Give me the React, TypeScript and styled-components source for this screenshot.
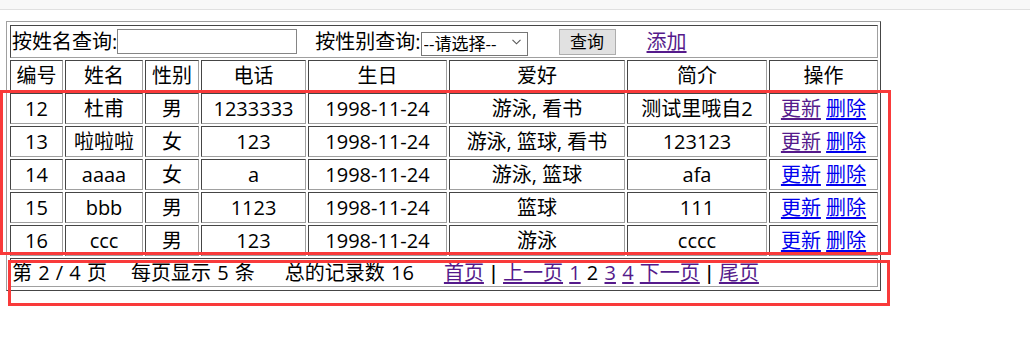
import React from "react";
import styled, { createGlobalStyle } from "styled-components";

const GlobalStyle = createGlobalStyle`
  html, body { margin: 0; padding: 0; background: #fff; }
  body {
    font-family: "Open Sans", "Noto Sans CJK SC", sans-serif;
    font-size: 20px;
    color: #000;
  }
`;

const Page = styled.div`
  position: relative;
  width: 1030px;
  height: 341px;
  overflow: hidden;
`;

const TopStrip = styled.div`
  height: 9px;
  background: #f8f8f8;
  border-bottom: 1px solid #e0e0e0;
`;

const Grid = styled.table`
  margin: 11px 0 0 6px;
  border-collapse: separate;
  border-spacing: 2px;
  padding: 1px 0 1px 1px;
  border: 1px solid;
  border-color: #a0a0a0 #454545 #454545 #a0a0a0;
  table-layout: fixed;
  width: 875px;
  box-sizing: border-box;
  font-size: 20px;
  line-height: 26px;
`;

const Col = styled.col<{ $w: number }>`
  width: ${(p) => p.$w}px;
`;

const Row = styled.tr<{ $h: number }>`
  height: ${(p) => p.$h}px;
`;

const Cell = styled.td<{ $left?: boolean }>`
  border: 1px solid;
  border-color: #454545 #a0a0a0 #a0a0a0 #454545;
  padding: 0 1px;
  text-align: ${(p) => (p.$left ? "left" : "center")};
  vertical-align: middle;
  white-space: nowrap;
  overflow: hidden;
`;

const HeadCell = styled.th`
  border: 1px solid;
  border-color: #454545 #a0a0a0 #a0a0a0 #454545;
  padding: 0 1px;
  font-weight: normal;
  text-align: center;
  vertical-align: middle;
  white-space: nowrap;
`;

const SearchBar = styled.div`
  display: flex;
  align-items: center;
  height: 31px;
`;

const Label = styled.span<{ $gap?: number }>`
  margin-left: ${(p) => p.$gap ?? 0}px;
`;

const NameInput = styled.input`
  box-sizing: border-box;
  width: 180px;
  height: 25px;
  margin: 0;
  padding: 0 2px;
  border: 1px solid #858585;
  border-radius: 0;
  background: #fff;
  font: inherit;
  font-size: 16px;
`;

const SelectWrap = styled.span`
  position: relative;
  display: inline-block;
  width: 107px;
  height: 24px;
`;

const GenderSelect = styled.select`
  appearance: none;
  -webkit-appearance: none;
  box-sizing: border-box;
  width: 107px;
  height: 24px;
  margin: 0;
  padding: 0 0 0 2px;
  border: 1px solid #767676;
  border-radius: 0;
  background: #fff;
  color: #000;
  font-family: "Open Sans", "Noto Sans CJK SC", sans-serif;
  font-size: 17px;
  line-height: 22px;
`;

const Chevron = styled.svg`
  position: absolute;
  right: 7px;
  top: 9px;
  pointer-events: none;
`;

const QueryButton = styled.button`
  box-sizing: border-box;
  width: 57px;
  height: 26px;
  margin: 0 0 0 31px;
  padding: 0;
  border: 1px solid #adadad;
  border-radius: 0;
  background: #e1e1e1;
  color: #000;
  font-family: "Open Sans", "Noto Sans CJK SC", sans-serif;
  font-size: 17px;
  line-height: 22px;
`;

const Link = styled.a<{ $visited?: boolean; $gap?: number }>`
  color: ${(p) => (p.$visited ? "#551a8b" : "#0000ee")};
  text-decoration: underline;
  text-underline-offset: 2px;
  margin-left: ${(p) => p.$gap ?? 0}px;
  cursor: pointer;
`;

const Pager = styled.div`
  display: flex;
  align-items: center;
  white-space: pre;
  word-spacing: 1px;
  height: 27px;
`;

const PagerInfo = styled.span<{ $after: number }>`
  margin-right: ${(p) => p.$after}px;
`;

const Pipe = styled.span`
  font-family: "Liberation Sans", sans-serif;
  font-size: 21px;
`;

const Annotation = styled.div<{ $x: number; $y: number; $w: number; $h: number }>`
  position: absolute;
  left: ${(p) => p.$x}px;
  top: ${(p) => p.$y}px;
  width: ${(p) => p.$w}px;
  height: ${(p) => p.$h}px;
  box-sizing: border-box;
  border: 3px solid #f93a3a;
  pointer-events: none;
`;

type Person = {
  id: number;
  name: string;
  sex: string;
  phone: string;
  birth: string;
  hobby: string;
  intro: string;
  visited: boolean;
};

const people: Person[] = [
  { id: 12, name: "杜甫", sex: "男", phone: "1233333", birth: "1998-11-24", hobby: "游泳, 看书", intro: "测试里哦自2", visited: true },
  { id: 13, name: "啦啦啦", sex: "女", phone: "123", birth: "1998-11-24", hobby: "游泳, 篮球, 看书", intro: "123123", visited: true },
  { id: 14, name: "aaaa", sex: "女", phone: "a", birth: "1998-11-24", hobby: "游泳, 篮球", intro: "afa", visited: false },
  { id: 15, name: "bbb", sex: "男", phone: "1123", birth: "1998-11-24", hobby: "篮球", intro: "111", visited: false },
  { id: 16, name: "ccc", sex: "男", phone: "123", birth: "1998-11-24", hobby: "游泳", intro: "cccc", visited: false },
];

const widths = [53, 78, 54, 105, 139, 176, 140, 109];
const headers = ["编号", "姓名", "性别", "电话", "生日", "爱好", "简介", "操作"];

export default function App() {
  return (
    <Page>
      <GlobalStyle />
      <TopStrip />
      <Grid>
        <colgroup>
          {widths.map((w, i) => (
            <Col key={i} $w={w} />
          ))}
        </colgroup>
        <tbody>
          <Row $h={33}>
            <Cell $left colSpan={8}>
              <SearchBar>
                <Label>按姓名查询:</Label>
                <NameInput type="text" />
                <Label $gap={18}>按性别查询:</Label>
                <SelectWrap>
                  <GenderSelect defaultValue="">
                    <option value="">--请选择--</option>
                    <option value="男">男</option>
                    <option value="女">女</option>
                  </GenderSelect>
                  <Chevron width="9" height="6" viewBox="0 0 9 6">
                    <path d="M0.5 0.8 L4.5 4.8 L8.5 0.8" fill="none" stroke="#555" strokeWidth="1.1" />
                  </Chevron>
                </SelectWrap>
                <QueryButton type="button">查询</QueryButton>
                <Link $visited $gap={31}>添加</Link>
              </SearchBar>
            </Cell>
          </Row>
          <Row $h={31}>
            {headers.map((h) => (
              <HeadCell key={h}>{h}</HeadCell>
            ))}
          </Row>
          {people.map((p) => (
            <Row $h={31} key={p.id}>
              <Cell>{p.id}</Cell>
              <Cell>{p.name}</Cell>
              <Cell>{p.sex}</Cell>
              <Cell>{p.phone}</Cell>
              <Cell>{p.birth}</Cell>
              <Cell>{p.hobby}</Cell>
              <Cell>{p.intro}</Cell>
              <Cell>
                <Link $visited={p.visited}>更新</Link> <Link>删除</Link>
              </Cell>
            </Row>
          ))}
          <Row $h={29}>
            <Cell $left colSpan={8}>
              <Pager>
                <PagerInfo $after={24}>第 2 / 4 页</PagerInfo>
                <PagerInfo $after={30}>每页显示 5 条</PagerInfo>
                <PagerInfo $after={30}>总的记录数 16</PagerInfo>
                <Link $visited>首页</Link>
                <Pipe> | </Pipe>
                <Link $visited>上一页</Link>
                <span> </span>
                <Link $visited>1</Link>
                <span> 2 </span>
                <Link $visited>3</Link>
                <span> </span>
                <Link $visited>4</Link>
                <span> </span>
                <Link $visited>下一页</Link>
                <Pipe> | </Pipe>
                <Link $visited>尾页</Link>
              </Pager>
            </Cell>
          </Row>
        </tbody>
      </Grid>
      <Annotation $x={0} $y={90} $w={891} $h={165} />
      <Annotation $x={8} $y={260} $w={882} $h={46} />
    </Page>
  );
}
